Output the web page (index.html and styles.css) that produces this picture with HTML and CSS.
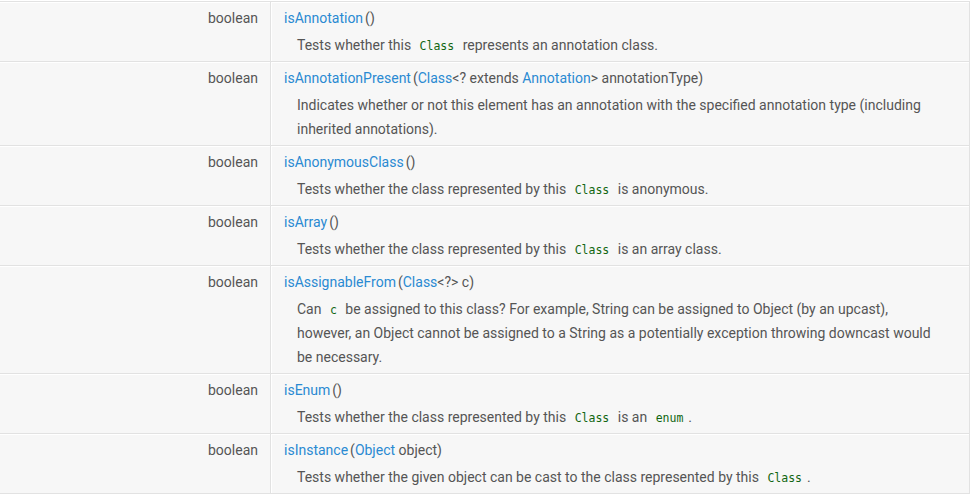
FILE: index.html
```html
<!DOCTYPE html>
<html>
<head>
<meta charset="utf-8">
<link rel="stylesheet" href="styles.css">
</head>
<body>
<div class="table">
  <div class="row">
    <div class="type">boolean</div>
    <div class="member">
      <div class="sig"><a class="name">isAnnotation</a>()</div>
      <div class="desc">Tests whether this <code>Class</code> represents an annotation class.</div>
    </div>
  </div>
  <div class="row two">
    <div class="type">boolean</div>
    <div class="member">
      <div class="sig"><a class="name">isAnnotationPresent</a>(<a>Class</a>&lt;? extends <a>Annotation</a>&gt; annotationType)</div>
      <div class="desc">Indicates whether or not this element has an annotation with the specified annotation type (including inherited annotations).</div>
    </div>
  </div>
  <div class="row">
    <div class="type">boolean</div>
    <div class="member">
      <div class="sig"><a class="name">isAnonymousClass</a>()</div>
      <div class="desc">Tests whether the class represented by this <code>Class</code> is anonymous.</div>
    </div>
  </div>
  <div class="row">
    <div class="type">boolean</div>
    <div class="member">
      <div class="sig"><a class="name">isArray</a>()</div>
      <div class="desc">Tests whether the class represented by this <code>Class</code> is an array class.</div>
    </div>
  </div>
  <div class="row three">
    <div class="type">boolean</div>
    <div class="member">
      <div class="sig"><a class="name">isAssignableFrom</a>(<a>Class</a>&lt;?&gt; c)</div>
      <div class="desc">Can <code>c</code> be assigned to this class? For example, String can be assigned to Object (by an upcast), however, an Object cannot be assigned to a String as a potentially exception throwing downcast would be necessary.</div>
    </div>
  </div>
  <div class="row">
    <div class="type">boolean</div>
    <div class="member">
      <div class="sig"><a class="name">isEnum</a>()</div>
      <div class="desc">Tests whether the class represented by this <code>Class</code> is an <code>enum</code>.</div>
    </div>
  </div>
  <div class="row">
    <div class="type">boolean</div>
    <div class="member">
      <div class="sig"><a class="name">isInstance</a>(<a>Object</a> object)</div>
      <div class="desc">Tests whether the given object can be cast to the class represented by this <code>Class</code>.</div>
    </div>
  </div>
</div>
</body>
</html>
```
FILE: styles.css
```css
html, body {
  margin: 0;
  padding: 0;
  background: #fff;
}
body {
  padding-top: 1px;
  font-family: Roboto, "Liberation Sans", sans-serif;
  font-size: 14px;
  color: #555;
}
.table {
  width: 969px;
  background: #f7f7f7;
  border-right: 1px solid #e2e2e2;
  border-bottom: 1px solid #e2e2e2;
}
.row {
  display: grid;
  grid-template-columns: 270px 1fr;
  height: 60px;
  box-sizing: border-box;
  border-top: 1px solid #e2e2e2;
  box-shadow: inset 0 1px 0 #fff;
}
.row.two {
  height: 84px;
}
.row.three {
  height: 108px;
}
.type {
  text-align: right;
  padding: 4px 12px 0 0;
  line-height: 24px;
}
.member {
  border-left: 1px solid #e2e2e2;
  box-shadow: inset 1px 0 0 #fff;
  padding: 4px 24px 0 13px;
  line-height: 24px;
}
a {
  color: #2a8ad2;
  text-decoration: none;
}
.name {
  margin-right: 2px;
}
.desc {
  margin-top: 3px;
  padding-left: 13px;
}
code {
  font-family: "DejaVu Sans Mono", "Liberation Mono", monospace;
  font-size: 11.5px;
  line-height: 1;
  color: #116611;
  padding: 0 5px;
}
```
